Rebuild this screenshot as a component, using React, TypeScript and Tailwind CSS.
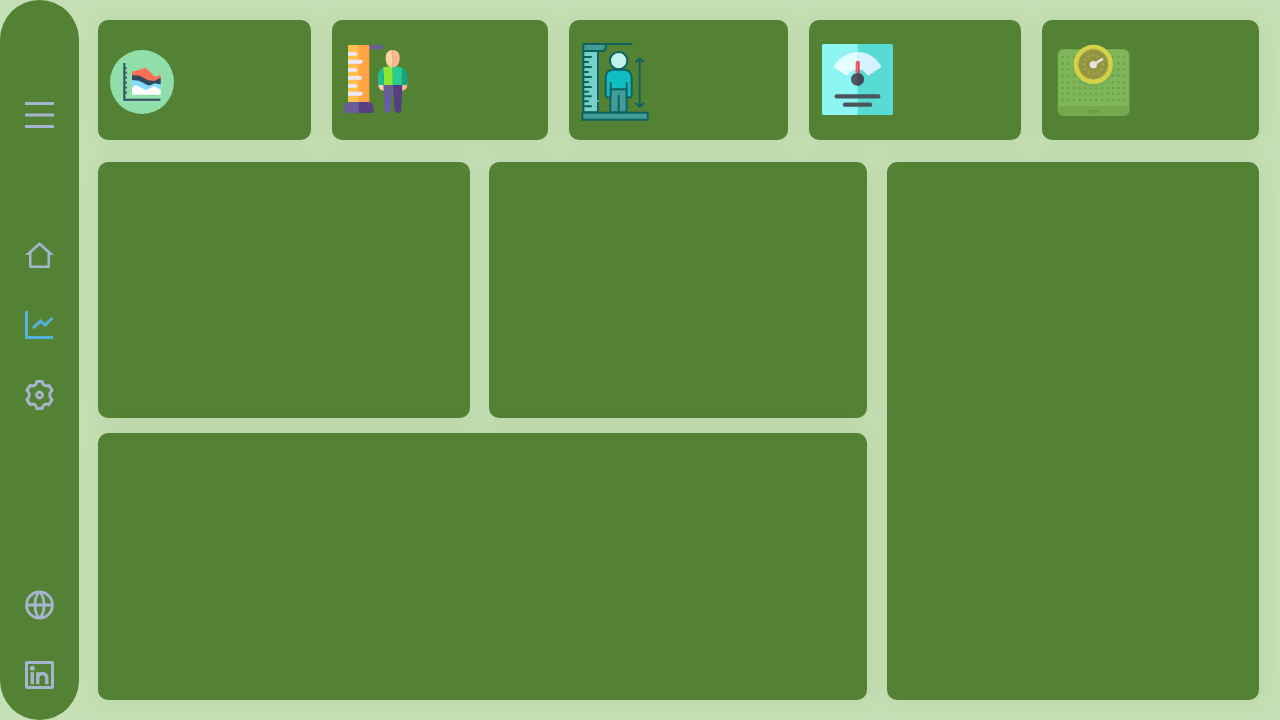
import type { ReactNode } from "react";

function NavIcon({ children }: { children: ReactNode }) {
  return (
    <svg width="29" height="30" viewBox="0 0 29 30" fill="none" stroke="currentColor" strokeWidth="3" aria-hidden="true">
      {children}
    </svg>
  );
}

function CardArt({ viewBox, children }: { viewBox: string; children: ReactNode }) {
  return (
    <svg width="80" height="80" viewBox={viewBox} fill="none" aria-hidden="true">
      {children}
    </svg>
  );
}

function Panel({ children }: { children?: ReactNode }) {
  return <section className="rounded-[10px] bg-[#548235] shadow-[0_0_22px_rgba(84,110,60,0.11)]">{children}</section>;
}

function AreaChartArt() {
  return (
    <CardArt viewBox="30 6 240 240">
      <circle cx="126" cy="126" r="96" fill="#90DFAA" />
      <path d="M96 95 L113 91 L137 83 L150 95 L165 110 L182 104 V125 L145 125 L96 110Z" fill="#FF7058" />
      <path d="M96 105 L119 107 L132 114 L145 121 L163 123 L174 117 L182 114 V134 L166 130 L147 138 L96 126Z" fill="#324A5E" />
      <path d="M96 120 L116 122 L132 130 L146 137 L163 131 L182 133 V154 H96Z" fill="#84DBFF" />
      <path d="M96 143 L107 135 L119 141 L138 151 L163 138 L182 150 V164 H96Z" fill="#fff" />
      <path d="M73 69 V179 H181" stroke="#324A5E" strokeWidth="6" />
      <path d="M76 84h5M76 98h5M76 113h5M76 128h5M76 143h5M76 158h5" stroke="#324A5E" strokeWidth="5" />
    </CardArt>
  );
}

function HeightColorArt() {
  return (
    <CardArt viewBox="30 18 240 240">
      <path d="M105 27h39a4 4 0 0 1 4 4v5a4 4 0 0 1-4 4h-39Z" fill="#685E9B" />
      <path d="M42 31q0-4 4-4h29v174H42Z" fill="#FFC14C" />
      <path d="M74 27h28q4 0 4 4v170H74Z" fill="#FFA344" />
      <path d="M42 48h22a5 5 0 0 1 0 11H42ZM42 71h38a6 6 0 0 1 0 12H42ZM42 96h22a5 5 0 0 1 0 11H42ZM42 120h38a6 6 0 0 1 0 11H42ZM42 144h22a5 5 0 0 1 0 11H42ZM42 167h38a6 6 0 0 1 0 12H42Z" fill="#F0E6FA" />
      <path d="M29 231V219Q29 198 48 198H75V231Z" fill="#685E9B" />
      <path d="M74 198h26q19 0 19 21v8q0 4-4 4H74Z" fill="#573E80" />
      <path d="M133 142h18v22q-18 0-18-17Z" fill="#FFD2A6" />
      <path d="M220 142h-19v22q19 0 19-17Z" fill="#FFB68C" />
      <path d="M148 139h29l-6 83q-1 9-10 9t-10-9Z" fill="#685E9B" />
      <path d="M176 139h29l-3 83q-1 9-9 9t-11-9Z" fill="#573E80" />
      <path d="M155 93h21v54h-44v-26q0-24 23-28Z" fill="#24BD92" />
      <path d="M176 93h20q24 4 24 30v24h-44Z" fill="#18A47B" />
      <path d="M148 94q15-5 28-1v54h-26V119Z" fill="#91E630" />
      <path d="M176 93q17-3 28 3v51h-28Z" fill="#29CD94" />
      <path d="M149 114v33M204 114v33" stroke="#16A078" strokeWidth="1.5" />
      <path d="M176 42c-15 0-22 11-21 26q1 20 14 25h7Z" fill="#FFD2A6" />
      <path d="M176 42c15 0 22 11 21 26q-1 20-14 25h-7Z" fill="#FFB68C" />
    </CardArt>
  );
}

function HeightOutlineArt() {
  return (
    <CardArt viewBox="27 18 240 240">
      <g stroke="#0E6260" strokeWidth="6" strokeLinecap="round" strokeLinejoin="round">
        <path d="M34 45h44v184H34Z" fill="#78D0CD" />
        <path d="M34 24h67v11q0 10-10 10H34Z" fill="#429D99" />
        <path d="M98 24h81" />
        <path d="M34 63h23M34 78h14M34 93h23M34 108h14M34 123h23M34 138h14M34 153h23M34 167h14M34 181h23M34 196h14M34 211h23" />
        <path d="M31 230h196v21H31Z" fill="#429D99" />
        <path d="M115 156h49v73h-49Z" fill="#429D99" />
        <path d="M140 180v48" />
        <path d="M122 101h36q21 2 21 24v52q0 8-8 8-6 0-7-8v-17h-48v17q-1 8-7 8-8 0-8-8v-52q0-22 21-24Z" fill="#10BFC1" />
        <path d="M116 141v20M164 141v20" />
        <circle cx="140" cy="74" r="26" fill="#C0F3EE" />
        <path d="M203 69v142M192 77l11-10 11 10M192 202l11 11 11-11" />
      </g>
      <path d="M75 195h7" stroke="#78D0CD" strokeWidth="4" />
    </CardArt>
  );
}

function DialScaleArt() {
  return (
    <CardArt viewBox="21 18 240 240">
      <rect x="24" y="24" width="213" height="213" rx="5" fill="#58DAD5" />
      <path d="M131 24H29q-5 0-5 5v203q0 5 5 5h102Z" fill="#8DF5F2" />
      <path d="M131 48Q87 49 61 88q-3 4 1 7l33 22q4 3 8-2 11-15 28-15Z" fill="#E4FFFF" />
      <path d="M131 48q44 1 69 40 3 4-1 7l-33 22q-4 3-8-2-11-15-27-15Z" fill="#D6F2FF" />
      <path d="M125 113V80q0-6 6-6v39Z" fill="#FF5067" />
      <path d="M131 74q6 0 6 6v33h-6Z" fill="#E83954" />
      <circle cx="130" cy="130" r="19" fill="#4D5760" />
      <path d="M131 111a19 19 0 0 1 0 38Z" fill="#424B54" />
      <path d="M68 181h125M93 206h75" stroke="#4A555D" strokeWidth="13" strokeLinecap="round" />
    </CardArt>
  );
}

function DottedScaleArt() {
  const columns = [38, 55, 72, 89, 106, 122, 139, 156, 173, 189, 205, 223];
  const rows = [63, 82, 100, 119, 138, 156, 174, 192];
  const ticks = [0, 30, 60, 90, 120, 150, 180, 210, 240, 270, 300, 330];
  return (
    <CardArt viewBox="12 18 240 240">
      <rect x="23" y="39" width="216" height="201" rx="18" fill="#70AA4E" />
      <path d="M26 210V59q0-17 17-17h176q17 0 17 17v151Z" fill="#7FB65A" />
      <path d="M26 210h210v9q0 18-18 18H44q-18 0-18-18Z" fill="#74A950" />
      {rows.map((y) =>
        columns.map((x) => <circle key={`${x}-${y}`} cx={x} cy={y} r="4" fill="#6CA24A" />),
      )}
      <circle cx="130" cy="91" r="62" fill="#78AF56" />
      <circle cx="130" cy="85" r="52" fill="#929440" stroke="#D4D347" strokeWidth="14" />
      <circle cx="130" cy="85" r="44" stroke="#A3A343" strokeWidth="3" />
      {ticks.map((angle) => (
        <circle key={angle} cx="130" cy="57" r="4.5" fill="#A4A04C" transform={`rotate(${angle} 130 85)`} />
      ))}
      <path d="M130 86l26-16" stroke="#E2E2DF" strokeWidth="8" strokeLinecap="round" />
      <circle cx="130" cy="86" r="11" fill="#E2E2DF" />
      <path d="M116 226h29" stroke="#659A45" strokeWidth="8" />
    </CardArt>
  );
}

export default function App() {
  return (
    <div className="flex min-h-screen bg-[#c5e0b4] font-['Liberation_Sans',sans-serif]">
      <nav aria-label="Main" className="relative z-10 flex w-[79px] shrink-0 flex-col items-center rounded-[40px] bg-[#548235] pt-[100px] pb-[30px] text-[#a6b4cd]">
        <button type="button" aria-label="Menu">
          <NavIcon>
            <path d="M0 3.5h29M0 15h29M0 26.5h29" />
          </NavIcon>
        </button>
        <div className="mt-[110px] flex flex-col gap-10">
          <a href="#home" aria-label="Home">
            <NavIcon>
              <path fill="currentColor" stroke="none" fillRule="evenodd" d="M14.5 2 29 15h-4v11.5q0 1.5-1.5 1.5h-18Q4 28 4 26.5V15H0ZM6.500 12.700V25.500h16V12.700l-8-7.200Z" />
            </NavIcon>
          </a>
          <a href="#charts" aria-label="Charts" aria-current="page" className="text-[#52b2dd]">
            <NavIcon>
              <path d="M1.500 1v26.500H28M8 18.200l7.500-7.200 4.700 4 7.500-7.300" />
            </NavIcon>
          </a>
          <a href="#settings" aria-label="Settings">
            <NavIcon>
              <path strokeWidth="3" strokeLinejoin="round" d="M11.800 1.500h5.400c.5 3.500 2.600 5.200 6.800 4l3.100 4.900c-3.200 2.400-3.200 6.800 0 9.200L24 24.500c-4.200-1.200-6.300.5-6.800 4h-5.400c-.5-3.500-2.600-5.200-6.800-4l-3.100-4.900c3.200-2.400 3.200-6.800 0-9.200L5 5.500c4.200 1.200 6.300-.5 6.800-4Z" />
              <circle cx="14.500" cy="15" r="3" strokeWidth="2.800" />
            </NavIcon>
          </a>
        </div>
        <div className="mt-auto flex flex-col gap-10">
          <a href="#website" aria-label="Website">
            <NavIcon>
              <g strokeWidth="2.800">
                <circle cx="14.500" cy="15" r="13" />
                <path d="M1 15h27M14.500 2C8.500 7 8.500 23 14.500 28M14.500 2c6 5 6 21 0 26" />
              </g>
            </NavIcon>
          </a>
          <a href="#linkedin" aria-label="LinkedIn">
            <NavIcon>
              <rect x="1.500" y="2.500" width="26" height="25" rx="0.500" />
              <circle cx="7.300" cy="8.200" r="2.500" fill="currentColor" stroke="none" />
              <path strokeWidth="3.400" d="M7.300 12.200v12M12.800 12.200v12M12.800 18c0-6 9-6 9 0v6.200" />
            </NavIcon>
          </a>
        </div>
      </nav>

      <main className="flex min-w-0 flex-1 flex-col gap-[22px] py-5 pr-[21px] pl-[19px]">
        <div className="grid h-[120px] grid-cols-[213fr_216fr_219fr_212fr_217fr] gap-[21px]">
          <Panel>
            <div className="pt-[22px] pl-3"><AreaChartArt /></div>
          </Panel>
          <Panel>
            <div className="pt-[22px] pl-3"><HeightColorArt /></div>
          </Panel>
          <Panel>
            <div className="pt-[22px] pl-3"><HeightOutlineArt /></div>
          </Panel>
          <Panel>
            <div className="pt-[22px] pl-3"><DialScaleArt /></div>
          </Panel>
          <Panel>
            <div className="pt-[22px] pl-3"><DottedScaleArt /></div>
          </Panel>
        </div>
        <div className="grid flex-1 grid-cols-[769fr_372fr] gap-5">
          <div className="grid grid-rows-[256fr_267fr] gap-[15px]">
            <div className="grid grid-cols-[372fr_378fr] gap-[19px]">
              <Panel />
              <Panel />
            </div>
            <Panel />
          </div>
          <Panel />
        </div>
      </main>
    </div>
  );
}
